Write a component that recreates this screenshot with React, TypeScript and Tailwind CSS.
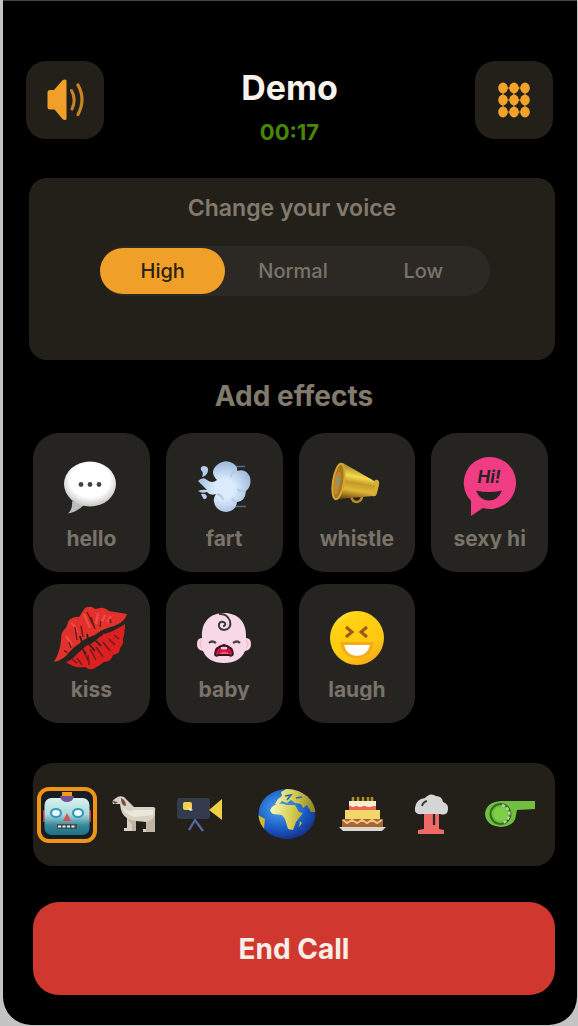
import { useState } from 'react';
import type { ReactNode } from 'react';

type Item = { id: string; icon: ReactNode };

const voices = ['High', 'Normal', 'Low'];

function SpeakerIcon() {
  return (
    <svg width="40" height="44" viewBox="0 0 40 44" fill="none" aria-hidden="true">
      <path d="M2.5 14.5Q2.500 12 5 12H9L17.500 2.200Q18.500 1.500 20.500 1.500Q21.500 1.500 21.500 3V40.500Q21.500 42 20 42Q18.500 42 17.500 41L9.500 31.500H5Q2.500 31.500 2.500 29Z" fill="#f0a028" />
      <path d="M26.5 12.5Q31.5 21.5 27 31" stroke="#c98423" strokeWidth="3" strokeLinecap="round" />
      <path d="M33 7Q41 21.5 33 36.5" stroke="#c98423" strokeWidth="3.2" strokeLinecap="round" />
    </svg>
  );
}

function KeypadIcon() {
  return (
    <svg width="32" height="36" viewBox="0 0 32 36" fill="#f2a32b" aria-hidden="true">
      <path d="M5 6H27M5 18H27M5 30H27M5 6V30M16 6V30M27 6V30" stroke="#8a611f" strokeWidth="2" />
      {[5, 16, 27].map((x) => [6, 18, 30].map((y) => <ellipse key={`${x}-${y}`} cx={x} cy={y} rx="4.8" ry="5.4" />))}
    </svg>
  );
}

function SpeechIcon() {
  return (
    <svg width="56" height="56" viewBox="1 -1 56 56" aria-hidden="true">
      <defs>
        <radialGradient id="speech" cx="50%" cy="42%" r="58%">
          <stop offset="65%" stopColor="#fff" />
          <stop offset="100%" stopColor="#c5c5c5" />
        </radialGradient>
      </defs>
      <path d="M10 41Q11 49 6 53.5Q14 52.5 22 45Z" fill="#bcbcbc" />
      <ellipse cx="28" cy="24" rx="26" ry="22.5" fill="url(#speech)" />
      <circle cx="19" cy="24.5" r="2.4" fill="#444" />
      <circle cx="28" cy="24.5" r="2.4" fill="#444" />
      <circle cx="37" cy="24.5" r="2.4" fill="#444" />
    </svg>
  );
}

function PuffIcon() {
  return (
    <svg width="56" height="56" viewBox="0 -1 56 56" fill="none" aria-hidden="true">
      <defs>
        <radialGradient id="puff" cx="50%" cy="55%" r="55%">
          <stop offset="35%" stopColor="#dcebfb" />
          <stop offset="100%" stopColor="#9db9dc" />
        </radialGradient>
      </defs>
      <path d="M37 6.5H49M38 46.5H50" stroke="#566a86" strokeWidth="1.6" />
      <path d="M2 21Q7 16 11 20Q16 24 21 20Q13 12 21 5Q30 -2 38 4Q42 7 41 11Q50 8 54 17Q56 26 50 31Q49 42 41 42Q40 51 30 52Q20 51 18 42Q17 38 20 34Q14 36 11 32Q6 34 2 31Q6 29 11 30Q6 25 2 21Z" fill="url(#puff)" />
      <path d="M39 11Q35 13 35 17M49 31Q44 32 41 29M21 34Q27 36 27 40M40 42Q37 41 36 38" stroke="#b3cae8" strokeWidth="2" />
      <path d="M7 6Q13 6 12 11Q11 16 6 17Q8 13 5 10Q4 7 7 6Z" fill="#b5ccea" />
      <path d="M5 34Q10 33 11 37Q9 41 7 38Z" fill="#b5ccea" />
    </svg>
  );
}

function MegaphoneIcon() {
  return (
    <svg width="58" height="52" viewBox="0 0 58 52" fill="none" aria-hidden="true">
      <defs>
        <linearGradient id="horn" x1="0.55" y1="0" x2="0.35" y2="1">
          <stop offset="0%" stopColor="#8b6416" />
          <stop offset="38%" stopColor="#f5db4f" />
          <stop offset="55%" stopColor="#c49a25" />
          <stop offset="75%" stopColor="#e0b838" />
          <stop offset="100%" stopColor="#76500e" />
        </linearGradient>
      </defs>
      <path d="M23 35Q24 41 29 41Q34 40 34 35" stroke="#b58b24" strokeWidth="2.5" />
      <path d="M15 2L48 21Q51 27 46 35L8 38Z" fill="url(#horn)" />
      <path d="M47 19Q52 18 51 24L49 32Q48 36 45 35Q47 28 47 19Z" fill="#d5ae35" />
      <ellipse cx="10.5" cy="20.5" rx="5.5" ry="18" transform="rotate(9 10.5 20.5)" fill="#a8781c" stroke="#d2a734" strokeWidth="2" />
      <ellipse cx="9" cy="22" rx="3" ry="12" transform="rotate(9 9 22)" fill="#c8852a" />
      <path d="M8 16L11 19L8 26" stroke="#8c9673" strokeWidth="3" />
    </svg>
  );
}

function HiIcon() {
  return (
    <svg width="56" height="62" viewBox="1 0 56 62" aria-hidden="true">
      <path d="M28 1A26 26 0 1 1 22 52L10 60V45A26 26 0 0 1 28 1Z" fill="#f03c83" />
      <text x="28" y="27" textAnchor="middle" fill="#262421" className="font-['Inter',sans-serif] text-[17px] font-bold italic">Hi!</text>
      <path d="M15 34.5Q28 37.5 41 34.5Q37 44.5 28 44.5Q19 44.5 15 34.5Z" fill="#262421" />
    </svg>
  );
}

function LipsIcon() {
  return (
    <svg width="76" height="66" viewBox="0 0 76 66" fill="none" aria-hidden="true">
      <path d="M1 57Q7 47 8 35Q8 26 13 23L16 15Q21 11 26 12L32 3Q38 0 42 4L47 3Q51 2 56 6L74 9Q72 17 61 21Q49 24 42 30Q32 33 27 38Q18 44 13 51Q7 56 1 57Z" fill="#e2302c" />
      <path d="M13 57Q19 55 24 49L34 40Q43 38 48 29Q57 29 72 19Q72 28 70 34Q71 39 67 43Q67 49 60 50Q58 57 51 57Q46 61 40 64Q36 65 32 62Q22 64 13 57Z" fill="#dc1f20" />
      <path d="M18 18Q23 21 24 28M31 9L37 23M45 8L43 19M52 10L48 19M13 31L19 40M58 11L54 17" stroke="#ee4b42" strokeWidth="2.5" />
      <path d="M34 7L40 20M38 12L42 24M22 22L24 35M28 21L30 32M16 37L18 43M11 46L14 47M48 16L47 22M57 14L58 18M24 53L29 60M31 47L36 57M37 44L43 55M43 42L50 52M50 37L57 46M56 34L62 40M61 30L66 34M19 54L24 58M35 50L36 60" stroke="#6d1d1a" strokeWidth="1.5" />
      <path d="M24 44L37 36L49 28" stroke="#262421" strokeWidth="4" />
      <path d="M28 42L33 49M35 38L42 46M42 35L48 41M29 38L27 31M35 34L34 29" stroke="#262421" strokeWidth="1.7" />
    </svg>
  );
}

function BabyIcon() {
  return (
    <svg width="58" height="56" viewBox="0 -1 58 56" fill="none" aria-hidden="true">
      <path d="M7 27C6 11 15 2 29 2S52 11 51 27Q56 27 56 33Q56 39 50 40Q45 52 29 52T8 40Q2 39 2 33Q2 27 7 27Z" fill="#f8d8e7" />
      <path d="M7 29Q3 32 7 37M51 29Q55 32 51 37" stroke="#eebdd4" strokeWidth="1.5" />
      <path d="M24 3Q32 2 35 10Q37 18 29 19Q23 18 24 13Q26 9 30 12Q31 15 28 15" stroke="#393940" strokeWidth="2" />
      <path d="M14 32Q17 29 21 32M38 32Q42 29 45 32" stroke="#46404b" strokeWidth="2.2" />
      <path d="M20 43Q20 36 29 34Q38 36 38 43Q37 46 34 44H24Q20 46 20 43Z" fill="#c41843" stroke="#38141f" strokeWidth="1.8" />
      <path d="M26 36H32V38Q29 39 26 38Z" fill="#f4c7cd" />
      <path d="M24 43Q29 38 35 43Z" fill="#ee5576" />
    </svg>
  );
}

function LaughIcon() {
  return (
    <svg width="56" height="56" viewBox="0 0 56 56" fill="none" aria-hidden="true">
      <defs>
        <linearGradient id="laugh" x1="0.2" y1="0" x2="0.8" y2="1">
          <stop offset="0%" stopColor="#ffe64b" />
          <stop offset="18%" stopColor="#fed211" />
          <stop offset="70%" stopColor="#fec710" />
          <stop offset="100%" stopColor="#f7a51b" />
        </linearGradient>
      </defs>
      <circle cx="28" cy="28" r="27" fill="url(#laugh)" />
      <path d="M17 17L23 22L17 27M38 17L32 22L38 27" stroke="#9d581d" strokeWidth="3" />
      <path d="M11 32H45Q43 48 28 48Q13 48 11 32Z" fill="#f9aa16" />
      <path d="M15 35H41Q38 46 28 46Q18 46 15 35Z" fill="#fff" />
    </svg>
  );
}

function RobotIcon() {
  return (
    <svg width="48" height="48" viewBox="0 0 48 48" fill="none" aria-hidden="true">
      <defs>
        <linearGradient id="robot" x1="0" y1="0" x2="0" y2="1">
          <stop offset="0%" stopColor="#d7f3ee" />
          <stop offset="45%" stopColor="#a7d8da" />
          <stop offset="75%" stopColor="#348596" />
          <stop offset="100%" stopColor="#1b7284" />
        </linearGradient>
      </defs>
      <path d="M19 1H29V6H19Z" fill="#f49a16" />
      <path d="M0 19H5V31H0ZM43 19H48V31H43Z" fill="#c92b35" />
      <rect x="1.5" y="7" width="45" height="37" rx="7" fill="url(#robot)" />
      <path d="M17 5H31Q30 11 24 11Q18 11 17 5Z" fill="#73549b" />
      <ellipse cx="13" cy="22" rx="5" ry="4" fill="#edfdfd" stroke="#3198bb" strokeWidth="2.2" />
      <ellipse cx="35" cy="22" rx="5" ry="4" fill="#edfdfd" stroke="#3198bb" strokeWidth="2.2" />
      <path d="M24 22L28 30H20Z" fill="#d65255" />
      <path d="M14 33H34V38H14Z" fill="#404d53" />
      <path d="M15 35.5H33" stroke="#e3e9e6" strokeWidth="2" strokeDasharray="3 1.5" />
    </svg>
  );
}

function GoatIcon() {
  return (
    <svg width="52" height="44" viewBox="0 0 52 44" fill="none" aria-hidden="true">
      <path d="M7 5Q10 2 15 4L20 9L25 14H44Q47 14 46 18V39H34V36H37V29L27 28V38H15V35H18V25Q12 22 11 11H4Q2 8 7 5Z" fill="#d8d1c4" />
      <path d="M12 11Q17 21 25 17H44V22L25 24Q14 20 12 11Z" fill="#ece7db" />
      <path d="M37 29V39H46V22Q43 28 37 29ZM18 26L27 28V38H23V31Z" fill="#bdb5a5" />
      <path d="M12 5Q17 7 17 13Q12 13 12 5Z" fill="#7c4b3d" />
      <path d="M3 8L6 11L9 9" fill="#514c47" />
    </svg>
  );
}

function CameraIcon() {
  return (
    <svg width="68" height="44" viewBox="0 0 68 44" fill="none" aria-hidden="true">
      <path d="M16 37L22 27L30 38" stroke="#5965a4" strokeWidth="2.3" />
      <rect x="4" y="5" width="33" height="21" rx="3" fill="#343b4d" />
      <path d="M36 17L49 6V27Z" fill="#f0cf43" />
      <rect x="10" y="9" width="9" height="8" rx="2" fill="#f2d04a" />
      <path d="M14 13L20 17L17 18Z" fill="#eee9d5" />
    </svg>
  );
}

function GlobeIcon() {
  return (
    <svg width="68" height="54" viewBox="0 1 68 54" fill="none" aria-hidden="true">
      <defs>
        <radialGradient id="sea" cx="40%" cy="40%" r="60%">
          <stop offset="0%" stopColor="#53a8ef" />
          <stop offset="60%" stopColor="#1b5fc8" />
          <stop offset="100%" stopColor="#162d87" />
        </radialGradient>
        <linearGradient id="land" gradientUnits="userSpaceOnUse" x1="20" y1="20" x2="62" y2="24">
          <stop offset="0%" stopColor="#f4f5b0" />
          <stop offset="45%" stopColor="#d9ce52" />
          <stop offset="100%" stopColor="#8c8420" />
        </linearGradient>
        <clipPath id="earth"><ellipse cx="34" cy="27" rx="28.5" ry="25" /></clipPath>
      </defs>
      <g clipPath="url(#earth)">
        <path d="M0 0H68V54H0Z" fill="url(#sea)" />
        <path d="M22 17L25 12L29 9L28 5L35 1L58 3L63 25L58 25L54 18L50 21L48 17L42 16L38 13L34 16L29 14L25 18Z" fill="url(#land)" />
        <path d="M19 20Q25 14 34 18L42 18L46 25L50 26L43 35L40 43L35 42L32 32L29 28L20 27Q15 24 19 20Z" fill="url(#land)" />
        <path d="M5 28L12 32L11 42L4 38ZM47 34L49 36L46 40Z" fill="#d5bb2b" />
        <path d="M32 9L38 8L34 13M43 11L49 10" stroke="#2467bc" strokeWidth="1.6" />
      </g>
    </svg>
  );
}

function CakeIcon() {
  return (
    <svg width="58" height="44" viewBox="0 0 58 44" fill="none" aria-hidden="true">
      <path d="M20 4V8M25 4V8M30 4V8M35 4V8M39 4V8" stroke="#ad9320" strokeWidth="2.5" />
      <path d="M16 8H43V19H16Z" fill="#f6ecce" />
      <path d="M16 13H43V18H16Z" fill="#ef664f" />
      <path d="M17 12Q20 16 23 12Q27 16 31 12Q36 16 42 12Z" fill="#fff6df" />
      <path d="M12 17H47V27H12Z" fill="#f1d767" />
      <path d="M9 26H50V35H9Z" fill="#a96532" />
      <path d="M10 27L14 30L19 27L24 30L29 27L34 30L39 27L44 30L49 27" stroke="#f2c48a" strokeWidth="2" />
      <path d="M6 34H53L49 38H10Z" fill="#d8d7d3" />
    </svg>
  );
}

function CloudIcon() {
  return (
    <svg width="58" height="48" viewBox="0 0 58 48" fill="none" aria-hidden="true">
      <path d="M21 21H36V38L41 39V43H15V39L21 38Z" fill="#ef6969" />
      <path d="M31 23V34" stroke="#2b2526" strokeWidth="2.2" />
      <path d="M22 7Q27 1 33 5Q39 5 40 11Q46 13 45 19Q44 25 37 23H19Q11 24 12 17Q13 8 22 7Z" fill="#d6d6d7" />
      <path d="M19 15Q20 11 24 10" stroke="#3d3c3c" strokeWidth="2" />
    </svg>
  );
}

function WhistleIcon() {
  return (
    <svg width="68" height="44" viewBox="0 1 68 44" fill="none" aria-hidden="true">
      <path d="M28 9H62V17L44 18L43 23Q42 34 28 35Q13 34 12 22Q13 10 28 9Z" fill="#70bf3e" />
      <circle cx="27.5" cy="22" r="10" stroke="#356b2a" strokeWidth="2" />
      <circle cx="27.5" cy="22" r="7" fill="#7bcf45" />
      <path d="M29 13Q38 17 36 24Q34 30 29 31" stroke="#b9cdb0" strokeWidth="2.5" strokeDasharray="3 2" />
    </svg>
  );
}

const effects: Item[] = [
  { id: 'hello', icon: <SpeechIcon /> },
  { id: 'fart', icon: <PuffIcon /> },
  { id: 'whistle', icon: <MegaphoneIcon /> },
  { id: 'sexy hi', icon: <HiIcon /> },
  { id: 'kiss', icon: <LipsIcon /> },
  { id: 'baby', icon: <BabyIcon /> },
  { id: 'laugh', icon: <LaughIcon /> },
];

const scenes: Item[] = [
  { id: 'robot', icon: <RobotIcon /> },
  { id: 'goat', icon: <GoatIcon /> },
  { id: 'camera', icon: <CameraIcon /> },
  { id: 'globe', icon: <GlobeIcon /> },
  { id: 'cake', icon: <CakeIcon /> },
  { id: 'cloud', icon: <CloudIcon /> },
  { id: 'referee', icon: <WhistleIcon /> },
];

function VoicePicker() {
  const [voice, setVoice] = useState('High');

  return (
    <fieldset className="mt-[22px] mr-[65px] ml-[71px] flex h-[50px] items-center gap-[5px] rounded-full bg-[#2c2925] pr-1">
      {voices.map((v) => (
        <label
          key={v}
          className="relative flex h-[46px] flex-1 cursor-pointer items-center justify-center rounded-full text-xl font-medium text-[#7b7468] has-checked:bg-[#f0a029] has-checked:text-[#2b210f]"
        >
          <input type="radio" name="voice" value={v} checked={voice === v} onChange={() => setVoice(v)} className="sr-only" />
          {v}
        </label>
      ))}
    </fieldset>
  );
}

export default function App() {
  const [scene, setScene] = useState('robot');

  return (
    <div className="min-h-screen bg-[#c4c4c4] pr-px pb-px pl-[3px] font-['Inter',sans-serif]">
      <main className="rounded-b-[28px] border-t border-[#444] bg-black px-[22px] pt-[60px] pb-[30px]">
        <header className="flex h-[78px] items-start justify-between pr-0.5 pl-px">
          <button aria-label="Speaker" className="flex size-[78px] items-center justify-center rounded-[20px] bg-[#23201a]">
            <SpeakerIcon />
          </button>
          <div className="pt-[7px] text-center">
            <h1 className="text-[34px] leading-10 font-bold text-[#f8f3ea]">Demo</h1>
            <p className="mt-2 text-[22px] leading-8 font-bold text-[#488800]">00:17</p>
          </div>
          <button aria-label="Keypad" className="flex size-[78px] items-center justify-center rounded-[20px] bg-[#23201a]">
            <KeypadIcon />
          </button>
        </header>

        <section className="mt-[39px] ml-1 rounded-[18px] bg-[#23201a] pt-[14px] pb-16">
          <h2 className="text-center text-[23px] leading-8 font-semibold text-[#827b6d]">Change your voice</h2>
          <VoicePicker />
        </section>

        <section className="mt-5 ml-2">
          <h2 className="text-center text-[28px] leading-8 font-bold text-[#827b6d]">Add effects</h2>
          <div className="mt-[21px] mr-[7px] grid grid-cols-4 gap-x-4 gap-y-3">
            {effects.map((e) => (
              <button key={e.id} className="flex h-[139px] flex-col items-center rounded-[26px] bg-[#262421] pt-5">
                <span className="flex h-[68px] items-center">{e.icon}</span>
                <span className="mt-1 h-6 overflow-hidden text-[21px] leading-7 font-bold whitespace-nowrap text-[#79736a]">{e.id}</span>
              </button>
            ))}
          </div>
        </section>

        <section className="mt-10 ml-2 flex h-[103px] items-center justify-between rounded-[20px] bg-[#23201a] pr-[14px] pl-1">
          {scenes.map((s) => (
            <button
              key={s.id}
              aria-label={s.id}
              aria-pressed={scene === s.id}
              onClick={() => setScene(s.id)}
              className="flex items-center justify-center rounded-xl aria-pressed:h-[56px] aria-pressed:w-[60px] aria-pressed:border-4 aria-pressed:border-[#ef9319] aria-pressed:bg-[#171d20]"
            >
              {s.icon}
            </button>
          ))}
        </section>

        <div className="mt-9 ml-2 flex">
          <button className="h-[93px] flex-1 rounded-[26px] bg-[#d0372e] text-[28px] font-bold text-[#f8eee5]">End Call</button>
        </div>
      </main>
    </div>
  );
}
